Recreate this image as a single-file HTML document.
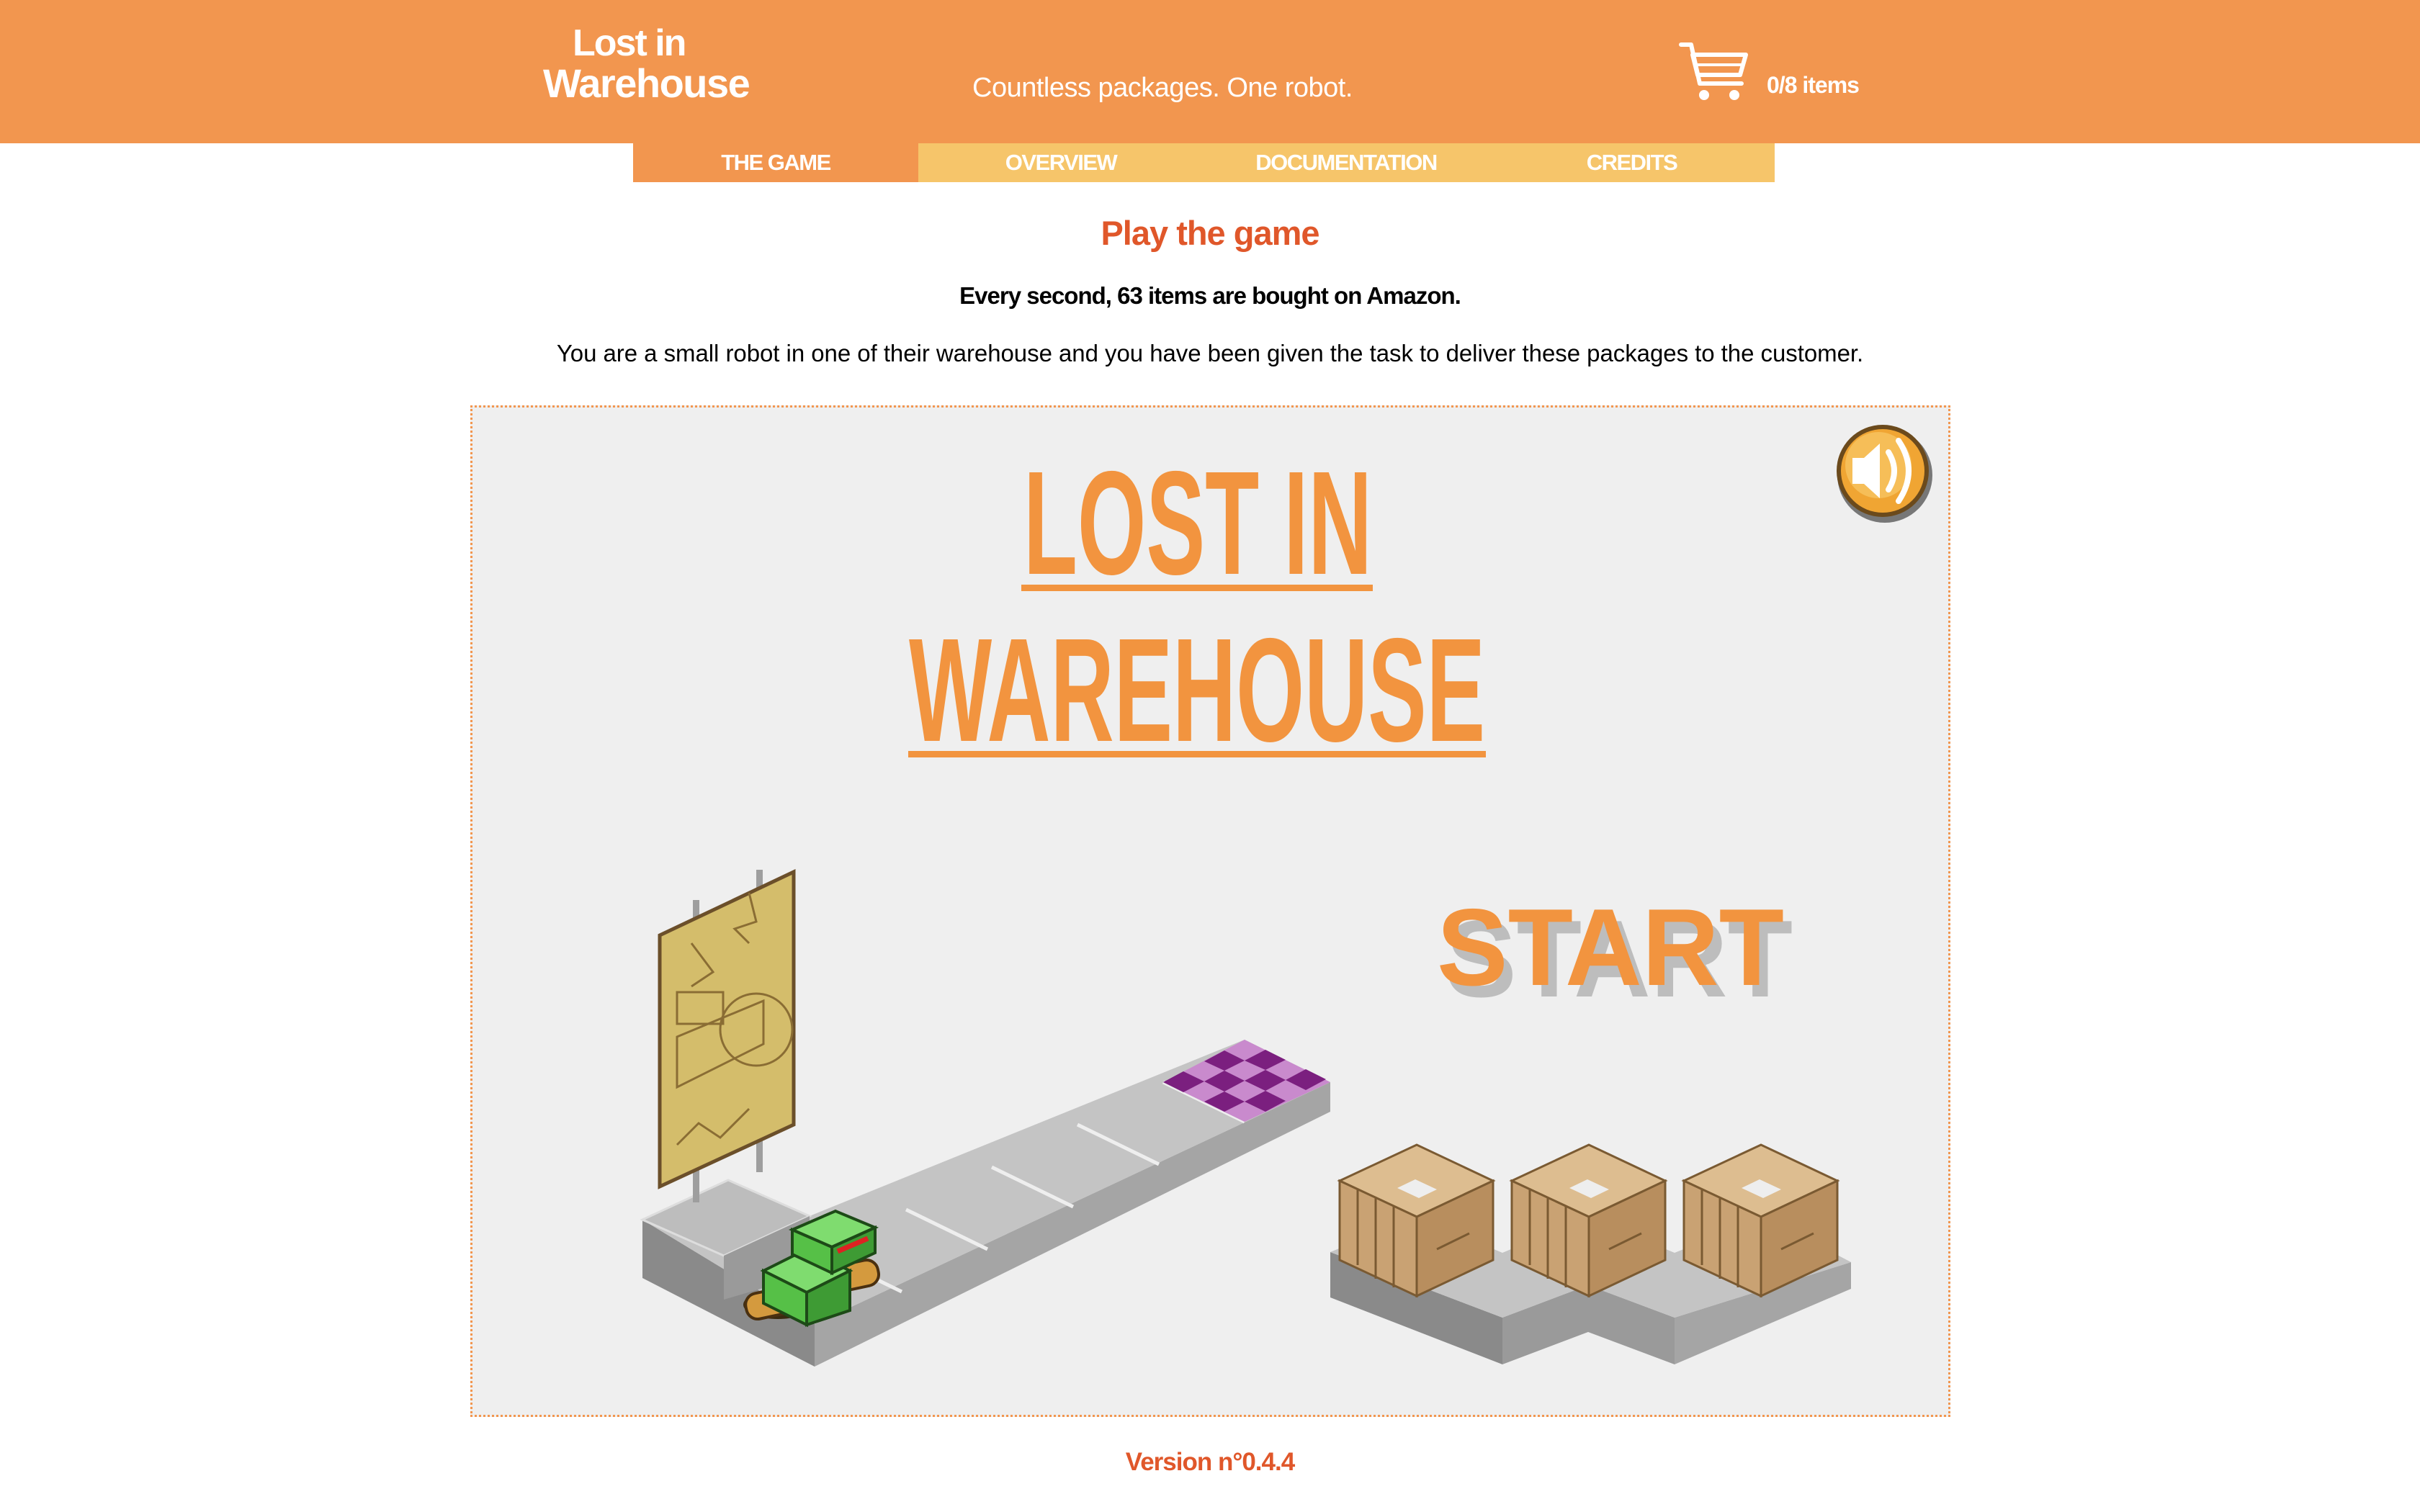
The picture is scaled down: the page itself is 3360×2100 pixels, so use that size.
<!DOCTYPE html>
<html><head><meta charset="utf-8"><style>
*{margin:0;padding:0;box-sizing:border-box}
body{width:3360px;height:2100px;background:#fff;position:relative;overflow:hidden;font-family:"Liberation Sans",sans-serif}
.hdr{position:absolute;left:0;top:0;width:3360px;height:199px;background:#F2964F}
.abs{position:absolute;white-space:nowrap}
.nav{position:absolute;top:199px;height:54px;width:396px;color:#fff;font-size:31px;font-weight:bold;text-align:center;line-height:54px;letter-spacing:-1.5px}
.c{position:absolute;left:0;width:3360px;text-align:center;white-space:nowrap}
</style></head><body>
<div class="hdr"></div>
<div class="abs" style="left:795px;top:30px;color:#fff;font-size:52px;font-weight:bold;letter-spacing:-2px;line-height:60px">Lost in</div>
<div class="abs" style="left:754px;top:84px;color:#fff;font-size:56px;font-weight:bold;letter-spacing:-1.5px;line-height:64px">Warehouse</div>
<div class="abs" style="left:1350px;top:100px;color:#fff;font-size:38px;letter-spacing:-0.5px;line-height:44px">Countless packages. One robot.</div>
<svg class="abs" style="left:2330px;top:56px" width="100" height="90" viewBox="0 0 100 90">
<path d="M4 6 L18 6 L30 60 L88 60" fill="none" stroke="#fff" stroke-width="6" stroke-linecap="round" stroke-linejoin="round"/>
<path d="M20 20 L94 20 L86 48 L27 48 Z" fill="none" stroke="#fff" stroke-width="6" stroke-linejoin="round"/>
<line x1="24" y1="34" x2="90" y2="34" stroke="#fff" stroke-width="4"/>
<circle cx="36" cy="76" r="7" fill="#fff"/><circle cx="78" cy="76" r="7" fill="#fff"/>
</svg>
<div class="abs" style="left:2453px;top:98px;color:#fff;font-size:32px;font-weight:bold;letter-spacing:-1px;line-height:40px">0/8 items</div>
<div class="nav" style="left:879px;background:#F2964F">THE GAME</div>
<div class="nav" style="left:1275px;background:#F6C56A">OVERVIEW</div>
<div class="nav" style="left:1671px;background:#F6C56A">DOCUMENTATION</div>
<div class="nav" style="left:2067px;background:#F6C56A;width:397px">CREDITS</div>
<div class="c" style="top:296px;color:#E0572A;font-size:47px;font-weight:bold;letter-spacing:-1px;line-height:56px">Play the game</div>
<div class="c" style="top:391px;color:#000;font-size:33px;font-weight:bold;letter-spacing:-1px;line-height:40px">Every second, 63 items are bought on Amazon.</div>
<div class="c" style="top:471px;color:#000;font-size:33px;letter-spacing:-0.05px;line-height:40px">You are a small robot in one of their warehouse and you have been given the task to deliver these packages to the customer.</div>
<div class="abs" style="left:653px;top:563px;width:2055px;height:1405px;background:#EFEFEF;border:3px dotted #F2964F"></div>
<svg class="abs" style="left:0;top:0" width="3360" height="2100" viewBox="0 0 3360 2100">
<text x="1663" y="797" text-anchor="middle" font-family="Liberation Sans Narrow, Liberation Sans, sans-serif" font-weight="bold" font-size="205" fill="#F2943F" textLength="484" lengthAdjust="spacingAndGlyphs">LOST IN</text>
<rect x="1418" y="812" width="488" height="9" fill="#F2943F"/>
<text x="1662" y="1029" text-anchor="middle" font-family="Liberation Sans Narrow, Liberation Sans, sans-serif" font-weight="bold" font-size="205" fill="#F2943F" textLength="800" lengthAdjust="spacingAndGlyphs">WAREHOUSE</text>
<rect x="1261" y="1043" width="802" height="9" fill="#F2943F"/>
<circle cx="2617" cy="660" r="66" fill="#777"/>
<circle cx="2614" cy="654" r="64" fill="#6b4a1c"/>
<circle cx="2614" cy="654" r="58" fill="#F0A533"/>
<circle cx="2608" cy="646" r="46" fill="#F6BE58"/>
<path d="M2572 636 h16 l22 -20 v76 l-22 -20 h-16 z" fill="#fff"/>
<path d="M2622 628 q16 26 0 52" fill="none" stroke="#fff" stroke-width="8" stroke-linecap="round"/>
<path d="M2636 612 q28 42 0 84" fill="none" stroke="#fff" stroke-width="8" stroke-linecap="round"/>
<text x="2007" y="1384" font-family="Liberation Sans, sans-serif" font-weight="bold" font-size="152" fill="#BDBDBD" textLength="482" lengthAdjust="spacingAndGlyphs">START</text>
<text x="1995" y="1368" font-family="Liberation Sans, sans-serif" font-weight="bold" font-size="152" fill="#F2943F" textLength="482" lengthAdjust="spacingAndGlyphs">START</text>
<polygon points="892,1694 1131,1839 1131,1898 892,1775" fill="#8a8a8a"/>
<polygon points="1131,1839 1847,1503 1847,1544 1131,1898" fill="#a5a5a5"/>
<polygon points="892,1694 1011,1639 1124,1689 1728,1444 1847,1503 1131,1839" fill="#C4C4C4"/>
<g stroke="#eee" stroke-width="5">
<line x1="1615" y1="1503" x2="1728" y2="1558"/>
<line x1="1496" y1="1562" x2="1609" y2="1617"/>
<line x1="1377" y1="1621" x2="1490" y2="1676"/>
<line x1="1258" y1="1680" x2="1371" y2="1735"/>
<line x1="1139" y1="1739" x2="1252" y2="1794"/>
</g>
<polygon points="1615,1503 1728,1444 1847,1503 1728,1558" fill="#C98ACD"/>
<g fill="#7B1F7F">
<polygon points="1615,1503 1643,1488 1672,1502 1643,1517"/>
<polygon points="1672,1502 1700,1487 1728,1501 1700,1516"/>
<polygon points="1728,1501 1757,1486 1785,1500 1757,1515"/>
<polygon points="1785,1500 1813,1485 1841,1499 1813,1514"/>
<polygon points="1672,1530 1700,1516 1728,1530 1700,1544"/>
<polygon points="1672,1474 1700,1459 1728,1473 1700,1487"/>
<polygon points="1728,1530 1757,1515 1785,1529 1757,1544"/>
<polygon points="1728,1473 1757,1458 1785,1472 1757,1486"/>
</g>
<polygon points="892,1694 1011,1639 1124,1689 1005,1744" fill="#BDBDBD" stroke="#ddd" stroke-width="3"/>
<polygon points="1005,1744 1124,1689 1124,1770 1005,1805" fill="#9a9a9a"/>
<rect x="962" y="1250" width="9" height="420" fill="#9e9e9e"/>
<rect x="1050" y="1208" width="9" height="420" fill="#9e9e9e"/>
<polygon points="916,1299 1102,1211 1102,1562 916,1648" fill="#D4BD6B" stroke="#6b4f2a" stroke-width="5"/>
<g fill="none" stroke="#8a6d34" stroke-width="3">
<rect x="940" y="1378" width="64" height="44"/>
<path d="M940 1440 l120 -50 v60 l-120 60 z"/>
<circle cx="1050" cy="1430" r="50"/>
<path d="M960 1310 l30 40 l-30 20 M1040 1240 l10 40 l-30 10 l20 20 M940 1590 l30 -30 l30 20 l40 -40"/>
</g>
<ellipse cx="1080" cy="1812" rx="48" ry="20" fill="#3a2a10"/>
<rect x="1035" y="1790" width="88" height="36" rx="16" fill="#D49A3E" stroke="#4a3010" stroke-width="4" transform="rotate(-12 1080 1808)"/>
<rect x="1150" y="1754" width="70" height="36" rx="16" fill="#D49A3E" stroke="#4a3010" stroke-width="4" transform="rotate(-12 1185 1772)"/>
<polygon points="1060,1765 1120,1735 1180,1765 1120,1795" fill="#7FDC6F" stroke="#1d4a17" stroke-width="4"/>
<polygon points="1120,1795 1180,1765 1180,1820 1120,1840" fill="#3e9b34" stroke="#1d4a17" stroke-width="4"/>
<polygon points="1060,1765 1120,1795 1120,1840 1060,1810" fill="#56c047" stroke="#1d4a17" stroke-width="4"/>
<polygon points="1100,1708 1160,1682 1215,1705 1155,1732" fill="#7FDC6F" stroke="#1d4a17" stroke-width="4"/>
<polygon points="1155,1732 1215,1705 1215,1740 1155,1768" fill="#3e9b34" stroke="#1d4a17" stroke-width="4"/>
<polygon points="1100,1708 1155,1732 1155,1768 1100,1742" fill="#56c047" stroke="#1d4a17" stroke-width="4"/>
<line x1="1163" y1="1738" x2="1205" y2="1720" stroke="#d22" stroke-width="7"/>
<polygon points="1847,1739 2086,1830 2086,1895 1847,1802" fill="#8a8a8a"/>
<polygon points="2086,1830 2205,1785 2325,1830 2325,1895 2205,1850 2086,1895" fill="#9a9a9a"/>
<polygon points="2325,1830 2570,1753 2570,1790 2325,1895" fill="#a5a5a5"/>
<polygon points="1847,1739 1967,1690 2086,1740 2205,1690 2325,1740 2450,1690 2570,1753 2325,1830 2205,1785 2086,1830" fill="#C4C4C4"/>
<g id="crate">
<polygon points="1860,1640 1967,1590 2073,1640 1967,1690" fill="#DDBD90" stroke="#7a5a32" stroke-width="3"/>
<polygon points="1860,1640 1967,1690 1967,1800 1860,1750" fill="#C9A273" stroke="#7a5a32" stroke-width="3"/>
<polygon points="1967,1690 2073,1640 2073,1750 1967,1800" fill="#B88E5E" stroke="#7a5a32" stroke-width="3"/>
<polygon points="1940,1650 1965,1638 1995,1652 1970,1664" fill="#eee"/>
<path d="M1885 1652 v105 M1910 1664 v112 M1935 1676 v112 M1995 1735 l45 -22" stroke="#7a5a32" stroke-width="3" fill="none"/>
</g>
<use href="#crate" x="239"/>
<use href="#crate" x="478"/>
</svg>
<div class="c" style="top:2010px;color:#E0572A;font-size:35px;font-weight:bold;letter-spacing:-1px;line-height:42px">Version n°0.4.4</div>
</body></html>
